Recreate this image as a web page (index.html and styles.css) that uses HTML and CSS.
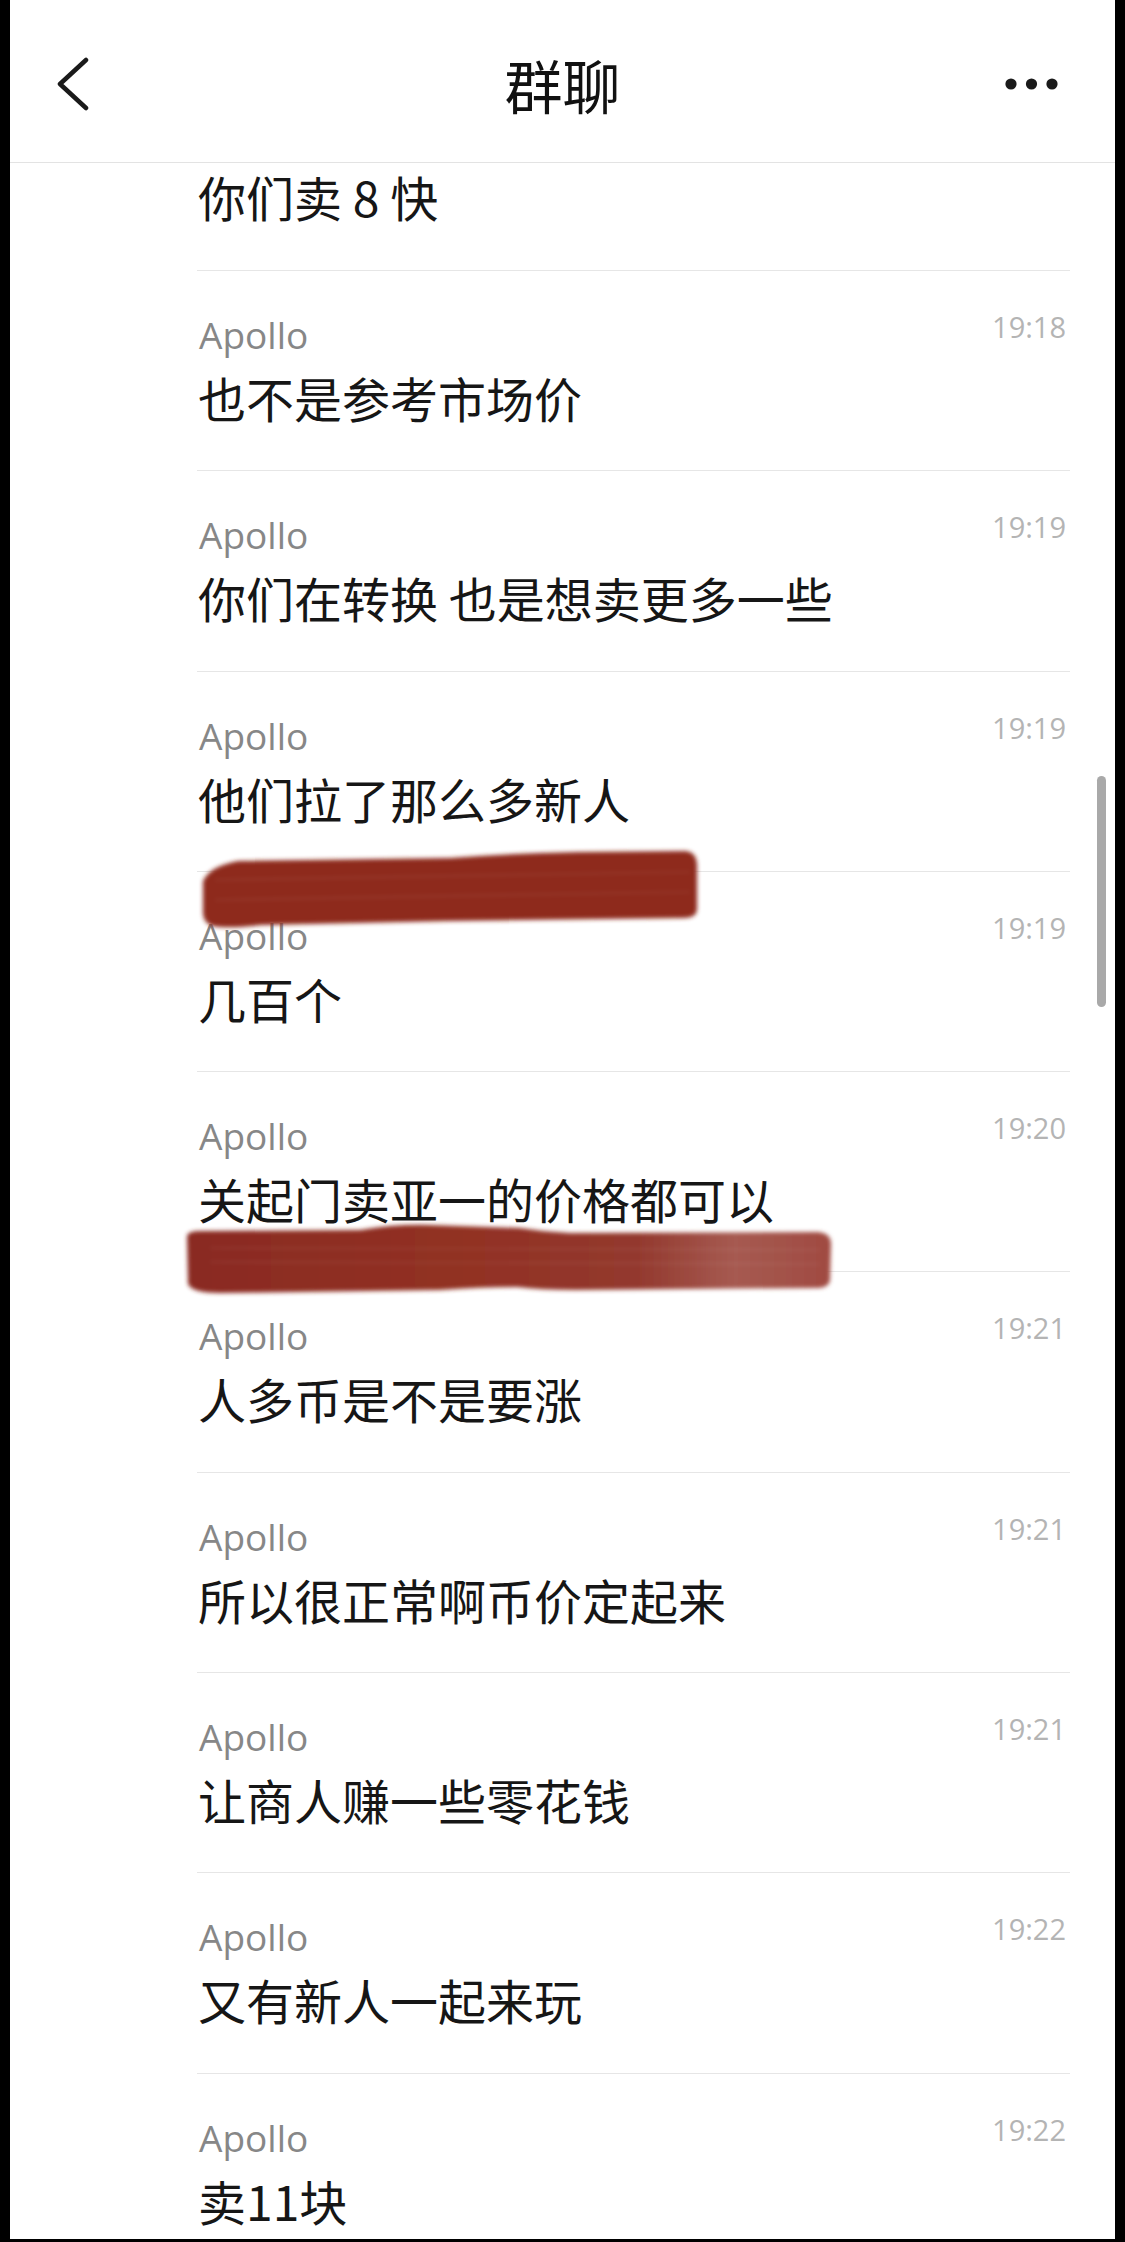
FILE: index.html
```html
<!doctype html>
<html lang="zh-CN">
<head>
    <meta charset="UTF-8" />
    <meta name="viewport" content="width=device-width,user-scalable=no">
    <title>群聊</title>
    <link rel="stylesheet" href="styles.css">
</head>
<body>
<section class="screen">
    <header class="bar">
        <a href="javascript:;" class="back">
            <svg width="34" height="56" viewBox="0 0 34 56">
                <polyline points="29,4 3,28 29,52" fill="none" stroke="#1a1a1a" stroke-width="4.5" stroke-linecap="round" stroke-linejoin="round"/>
            </svg>
        </a>
        <h1 class="title">群聊</h1>
        <a href="javascript:;" class="more">
            <svg width="54" height="14" viewBox="0 0 54 14">
                <circle cx="6" cy="7" r="5.6" fill="#1a1a1a"/>
                <circle cx="26.5" cy="7" r="5.6" fill="#1a1a1a"/>
                <circle cx="47" cy="7" r="5.6" fill="#1a1a1a"/>
            </svg>
        </a>
    </header>

    <ul class="list">
        <li class="row cut">
            <p class="msg">你们卖 8 快</p>
        </li>
        <li class="row">
            <div class="top"><span class="name">Apollo</span><span class="time">19:18</span></div>
            <p class="msg">也不是参考市场价</p>
        </li>
        <li class="row">
            <div class="top"><span class="name">Apollo</span><span class="time">19:19</span></div>
            <p class="msg">你们在转换 也是想卖更多一些</p>
        </li>
        <li class="row">
            <div class="top"><span class="name">Apollo</span><span class="time">19:19</span></div>
            <p class="msg">他们拉了那么多新人</p>
        </li>
        <li class="row">
            <div class="top"><span class="name">Apollo</span><span class="time">19:19</span></div>
            <p class="msg">几百个</p>
        </li>
        <li class="row">
            <div class="top"><span class="name">Apollo</span><span class="time">19:20</span></div>
            <p class="msg">关起门卖亚一的价格都可以</p>
        </li>
        <li class="row">
            <div class="top"><span class="name">Apollo</span><span class="time">19:21</span></div>
            <p class="msg">人多币是不是要涨</p>
        </li>
        <li class="row">
            <div class="top"><span class="name">Apollo</span><span class="time">19:21</span></div>
            <p class="msg">所以很正常啊币价定起来</p>
        </li>
        <li class="row">
            <div class="top"><span class="name">Apollo</span><span class="time">19:21</span></div>
            <p class="msg">让商人赚一些零花钱</p>
        </li>
        <li class="row">
            <div class="top"><span class="name">Apollo</span><span class="time">19:22</span></div>
            <p class="msg">又有新人一起来玩</p>
        </li>
        <li class="row">
            <div class="top"><span class="name">Apollo</span><span class="time">19:22</span></div>
            <p class="msg">卖11块</p>
        </li>
    </ul>

    <!-- 红色涂抹，盖在列表上面 -->
    <svg class="marks" width="1105" height="2239" viewBox="10 0 1105 2239">
        <defs>
            <filter id="soft" x="-5%" y="-30%" width="110%" height="160%">
                <feGaussianBlur stdDeviation="2.2"/>
            </filter>
            <linearGradient id="ink2" x1="0" x2="1" y1="0" y2="0">
                <stop offset="0" stop-color="#8a2b22"/>
                <stop offset="0.45" stop-color="#923124"/>
                <stop offset="0.7" stop-color="#93392e"/>
                <stop offset="0.85" stop-color="#a65a51"/>
                <stop offset="1" stop-color="#a04a41"/>
            </linearGradient>
        </defs>
        <path filter="url(#soft)" fill="#8e2a1e"
              d="M203,881 Q210,866 238,861 L450,858 Q520,853 580,852 L686,851 Q696,852 697,864 L697,910 Q696,918 684,918 L450,921 L262,925 Q228,929 212,926 Q202,922 203,910 Z"/>
        <path filter="url(#soft)" fill="url(#ink2)"
              d="M187,1236 Q188,1231 200,1231 L360,1230 Q395,1224 430,1225 L520,1228 Q545,1232 570,1233 L818,1232 Q831,1233 831,1244 L830,1280 Q829,1288 816,1288 L575,1290 Q540,1290 517,1287 Q480,1287 440,1290 L220,1293 Q192,1293 188,1284 Z"/>
        <g opacity="0.12" stroke="#ffffff" stroke-width="1.2" filter="url(#soft)">
            <line x1="210" y1="1248" x2="820" y2="1250"/>
            <line x1="210" y1="1262" x2="820" y2="1264"/>
            <line x1="215" y1="880" x2="690" y2="872"/>
            <line x1="215" y1="900" x2="690" y2="892"/>
        </g>
    </svg>

    <div class="scroll"></div>
</section>
</body>
</html>
```

FILE: styles.css
```css
body{
    margin: 0;
    background: #000;
}
.screen{
    width: 1105px;
    height: 2239px;
    margin-left: 10px;
    background: #fff;
    position: relative;
    overflow: hidden;
    font-family: "Noto Sans CJK SC", "Noto Sans", sans-serif;
    color: #161616;
}
.bar{
    height: 163px;
    box-sizing: border-box;
    padding-top: 6px;
    border-bottom: 1px solid #e3e3e3;
    display: grid;
    grid-template-columns: 1fr auto 1fr;
    align-items: center;
}
.back{
    justify-self: start;
    margin-left: 47px;
    display: block;
    height: 56px;
}
.back svg,
.more svg{
    display: block;
}
.title{
    margin: 0;
    font-size: 58px;
    font-weight: 400;
    line-height: 80px;
    color: #111;
}
.more{
    justify-self: end;
    margin-right: 56px;
    display: block;
}
.list{
    list-style: none;
    margin: 0 45px 0 187px;
    padding: 0;
}
.row{
    padding: 39px 4px 39.3px 0;
    border-bottom: 1px solid #e6e6e6;
}
.row.cut{
    padding-top: 3px;
    padding-bottom: 40px;
}
.top{
    display: flex;
    justify-content: space-between;
    align-items: flex-start;
    height: 50px;
    margin-bottom: 7px;
}
.name{
    font-family: "Open Sans", "Liberation Sans", sans-serif;
    font-size: 37px;
    line-height: 50px;
    color: #878787;
    padding-left: 2px;
}
.time{
    font-family: "Open Sans", "Liberation Sans", sans-serif;
    font-size: 29px;
    line-height: 40px;
    margin-top: -3px;
    color: #b4b4b4;
}
.msg{
    margin: 0;
    font-size: 48px;
    line-height: 60px;
    height: 64px;
    padding-left: 1px;
    white-space: nowrap;
}
.marks{
    position: absolute;
    left: 0;
    top: 0;
    pointer-events: none;
}
.scroll{
    position: absolute;
    left: 1087px;
    top: 776px;
    width: 9px;
    height: 231px;
    border-radius: 5px;
    background: #a9a9a9;
}
```
